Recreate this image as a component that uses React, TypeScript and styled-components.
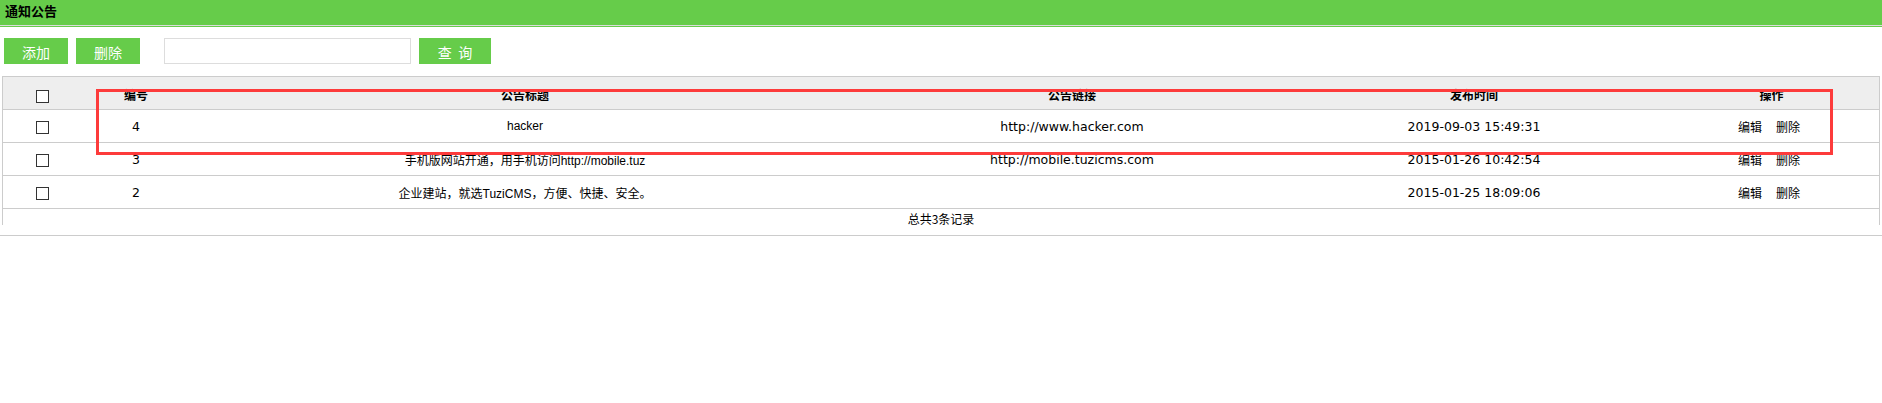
import React from "react";
import styled, { createGlobalStyle } from "styled-components";

const GREEN = "#66cc4a";
const LINE = "#cccccc";

const GlobalStyle = createGlobalStyle`
  html, body { margin: 0; padding: 0; background: #fff; }
  body { font-family: "DejaVu Sans", "Noto Sans CJK SC", sans-serif; font-size: 12px; color: #000; }
`;

const Page = styled.div`
  position: relative;
  width: 1882px;
`;

const TitleBar = styled.div`
  height: 25px;
  background: ${GREEN};
  border-bottom: 1px solid #dcdcdc;
  box-shadow: 0 1px 0 ${GREEN};
  padding-left: 5px;
  font-family: "Noto Sans CJK SC", sans-serif;
  font-weight: bold;
  font-size: 13px;
  line-height: 21px;
  color: #000;
`;

const Toolbar = styled.div`
  display: flex;
  align-items: center;
  padding: 12px 0 0 4px;
  height: 26px;
`;

const GreenButton = styled.button<{ $w: number; $gapAfter: number }>`
  width: ${(p) => p.$w}px;
  height: 26px;
  margin: 0 ${(p) => p.$gapAfter}px 0 0;
  padding: 0;
  border: none;
  background: ${GREEN};
  color: #fff;
  font-family: "Noto Sans CJK SC", sans-serif;
  font-size: 14px;
  line-height: 28px;
  cursor: pointer;
`;

const SearchInput = styled.input`
  box-sizing: border-box;
  width: 247px;
  height: 26px;
  margin: 0 8px 0 0;
  border: 1px solid #dddddd;
  padding: 0 4px;
  outline: none;
`;

const TableWrap = styled.div`
  margin-top: 12px;
  padding: 0 2px 10px 2px;
  border-bottom: 1px solid ${LINE};
`;

const Table = styled.table`
  width: 1878px;
  table-layout: fixed;
  border-collapse: separate;
  border-spacing: 0;
  border-top: 1px solid ${LINE};
  border-left: 1px solid ${LINE};
  border-right: 1px solid ${LINE};
`;

const Col = styled.col<{ $w: number }>`
  width: ${(p) => p.$w}px;
`;

const HeadCell = styled.th`
  height: 33px;
  padding: 3px 0 0 0;
  box-sizing: border-box;
  background: #eeeeee;
  border-bottom: 1px solid ${LINE};
  font-family: "Noto Sans CJK SC", sans-serif;
  font-weight: bold;
  font-size: 12px;
  text-align: center;
  vertical-align: middle;
`;

const Cell = styled.td<{ $title?: boolean; $ops?: boolean }>`
  height: 32px;
  padding: 0 ${(p) => (p.$ops ? "5px" : "0")} 0 0;
  border-bottom: 1px solid ${LINE};
  text-align: center;
  vertical-align: middle;
  white-space: nowrap;
  overflow: hidden;
  font-family: ${(p) =>
    p.$title
      ? `"Liberation Sans", "Noto Sans CJK SC", sans-serif`
      : `"DejaVu Sans", "Noto Sans CJK SC", sans-serif`};
  font-size: ${(p) => (p.$title ? "12px" : "12.5px")};
  color: #000;
`;

const Check = styled.input`
  appearance: none;
  -webkit-appearance: none;
  display: inline-block;
  width: 13px;
  height: 13px;
  margin: 0;
  border: 1px solid #333;
  background: #fff;
  vertical-align: middle;
  box-sizing: border-box;
`;

const OpLink = styled.a<{ $first?: boolean }>`
  font-family: "Noto Sans CJK SC", sans-serif;
  font-size: 12px;
  color: #000;
  text-decoration: none;
  margin-right: ${(p) => (p.$first ? "14px" : "0")};
`;

const Footer = styled.div`
  box-sizing: border-box;
  width: 1878px;
  height: 16px;
  padding-top: 1px;
  border-left: 1px solid ${LINE};
  border-right: 1px solid ${LINE};
  text-align: center;
  font-family: "Noto Sans CJK SC", sans-serif;
  font-size: 12px;
  line-height: 17px;
`;

const Annotation = styled.div`
  position: absolute;
  left: 96px;
  top: 89px;
  width: 1737px;
  height: 66px;
  box-sizing: border-box;
  border: 3px solid #fd3b3b;
  pointer-events: none;
`;

type Notice = { id: number; title: string; link: string; time: string };

const rows: Notice[] = [
  { id: 4, title: "hacker", link: "http://www.hacker.com", time: "2019-09-03 15:49:31" },
  { id: 3, title: "手机版网站开通，用手机访问http://mobile.tuz", link: "http://mobile.tuzicms.com", time: "2015-01-26 10:42:54" },
  { id: 2, title: "企业建站，就选TuziCMS，方便、快捷、安全。", link: "", time: "2015-01-25 18:09:06" },
];

export default function App() {
  return (
    <Page>
      <GlobalStyle />
      <TitleBar>通知公告</TitleBar>
      <Toolbar>
        <GreenButton $w={64} $gapAfter={8}>添加</GreenButton>
        <GreenButton $w={64} $gapAfter={24}>删除</GreenButton>
        <SearchInput type="text" />
        <GreenButton $w={72} $gapAfter={0}>查&nbsp;&nbsp;询</GreenButton>
      </Toolbar>
      <TableWrap>
        <Table>
          <colgroup>
            <Col $w={79} />
            <Col $w={108} />
            <Col $w={670} />
            <Col $w={424} />
            <Col $w={380} />
            <Col $w={215} />
          </colgroup>
          <thead>
            <tr>
              <HeadCell><Check type="checkbox" /></HeadCell>
              <HeadCell>编号</HeadCell>
              <HeadCell>公告标题</HeadCell>
              <HeadCell>公告链接</HeadCell>
              <HeadCell>发布时间</HeadCell>
              <HeadCell>操作</HeadCell>
            </tr>
          </thead>
          <tbody>
            {rows.map((r) => (
              <tr key={r.id}>
                <Cell><Check type="checkbox" /></Cell>
                <Cell>{r.id}</Cell>
                <Cell $title>{r.title}</Cell>
                <Cell>{r.link}</Cell>
                <Cell>{r.time}</Cell>
                <Cell $ops>
                  <OpLink href="#" $first>编辑</OpLink>
                  <OpLink href="#">删除</OpLink>
                </Cell>
              </tr>
            ))}
          </tbody>
        </Table>
        <Footer>总共3条记录</Footer>
      </TableWrap>
      <Annotation />
    </Page>
  );
}
